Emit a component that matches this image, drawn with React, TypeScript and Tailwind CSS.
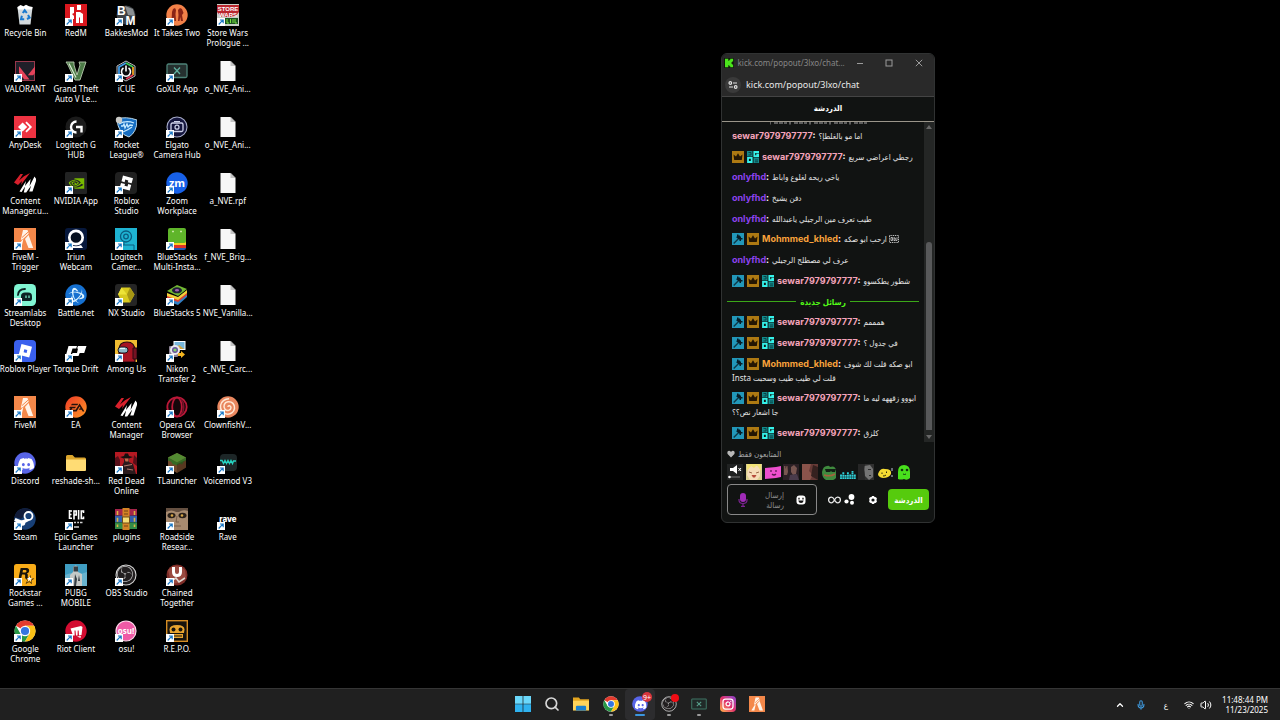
import type { ReactNode } from 'react';
import { ChevronUp, Instagram, Mic, Search, Volume2, Wifi } from 'lucide-react';
import {
  SiBattledotnet,
  SiDiscord,
  SiEa,
  SiNvidia,
  SiObsstudio,
  SiRockstargames,
  SiValorant,
} from 'react-icons/si';

/* ---------- desktop icons ---------- */

function Art({ children }: { children: ReactNode }) {
  return (
    <svg viewBox="0 0 22 22" className="size-full" aria-hidden="true">
      {children}
    </svg>
  );
}

const FileArt = (
  <Art>
    <path d="M3.5 1h10l5 5v15h-15z" fill="#f7f7f7" />
    <path d="M13.5 1v5h5z" fill="#c4c4c4" />
    <path d="M13.5 1l5 5" stroke="#8d8d8d" strokeWidth=".6" />
  </Art>
);

const FiveMArt = (
  <Art>
    <rect width="22" height="22" fill="#f4884a" />
    <path d="M9 2h4.5l1.2 3.800-5.700 5.200-2.200 1zM7.400 13l2-2L7.400 20H3.200zM14.600 7L19.200 20h-4.700L11 11z" fill="#fff3e8" />
    <path d="M8 9.500l6-5.300" stroke="#f4884a" strokeWidth="1" />
  </Art>
);

const ContentManagerArt = (
  <Art>
    <path d="M0 10.500L6.500 2 9 2 5 8.500 10 4.300 16 1 9.500 9.500 7 13l1-4-4 4z" fill="#d8202c" />
    <path d="M5.500 19.500L12 9 11 14l5.600-7-1 7L20.500 4.500 22.500 7.500 18.500 19.500h-3.300l2-6-5 7h-2.400l1.300-6L7.600 20z" fill="#fff" />
  </Art>
);

function ChromeArt() {
  return (
    <Art>
      <circle cx="11" cy="11" r="10.5" fill="#fff" />
      <path d="M11 11L1.9 5.75A10.5 10.5 0 0 1 20.1 5.75H11z" fill="#e33b2e" />
      <path d="M1.9 5.75L6.4 13.6 11 16.2 11 21.500A10.500 10.500 0 0 1 1.900 5.750z" fill="#279847" />
      <path d="M6.4 13.6L11 21.5l4.6-7.9z" fill="#279847" />
      <path d="M15.6 13.6L11 21.5A10.5 10.5 0 0 0 20.1 5.75H11z" fill="#fbc116" />
      <circle cx="11" cy="11" r="5.2" fill="#fff" />
      <circle cx="11" cy="11" r="4.1" fill="#3475e0" />
    </Art>
  );
}

function FolderArt() {
  return (
    <Art>
      <path d="M1 4.5Q1 3 2.5 3h5l2.4 2.5h9.6Q21 5.5 21 7v11H1z" fill="#dba52c" />
      <path d="M1 7.5h20V18q0 1-1 1H2q-1 0-1-1z" fill="#ffdc74" />
    </Art>
  );
}

function ObsArt() {
  return (
    <Art>
      <circle cx="11" cy="11" r="10" fill="#221f20" stroke="#d2d2d2" strokeWidth="1.1" />
      <SiObsstudio x="2" y="2" width="18" height="18" color="#bdbdbd" />
    </Art>
  );
}

function DiscordArt() {
  return (
    <Art>
      <circle cx="11" cy="11" r="10.7" fill="#5865e8" />
      <SiDiscord x="4" y="4" width="14" height="14" color="#fff" />
    </Art>
  );
}

type Item = { lines: string[]; art: ReactNode; shortcut?: boolean };

const items: Item[] = [
  {
    lines: ['Recycle Bin'],
    shortcut: false,
    art: (
      <Art>
        <path d="M3.5 3h15l-2 17.5h-11z" fill="#d3dadd" />
        <path d="M3.5 3l3-2 3 1.2L12 .8l3 1.4 3.5.8-.4 2.5H3.8z" fill="#fff" />
        <path d="M8.800 9l1.900-2.700L12.800 9M14 11l1.600 2.700-2.600 1.300M10.200 15.300H7l.9-3.600" fill="none" stroke="#1879cf" strokeWidth="2" />
      </Art>
    ),
  },
  {
    lines: ['VALORANT'],
    art: (
      <Art>
        <rect x="1.500" y="1.500" width="19" height="19" fill="#201f29" stroke="#97374b" />
        <SiValorant x="5" y="5" width="12" height="12" color="#e5425a" />
      </Art>
    ),
  },
  {
    lines: ['AnyDesk'],
    art: (
      <Art>
        <rect width="22" height="22" fill="#ee3342" />
        <path d="M4 11l4.6-4.6L13.2 11l-4.6 4.6z" fill="#fff" />
        <path d="M12 6.2L16.8 11 12 15.8" fill="none" stroke="#fff" strokeWidth="1.8" />
      </Art>
    ),
  },
  { lines: ['Content', 'Manager.u...'], shortcut: false, art: ContentManagerArt },
  { lines: ['FiveM -', 'Trigger'], art: FiveMArt },
  {
    lines: ['Streamlabs', 'Desktop'],
    art: (
      <Art>
        <rect width="22" height="22" rx="4.5" fill="#80f5d2" />
        <path d="M4 11c.3-4 3-6 7-6" fill="none" stroke="#0c2324" strokeWidth="1.8" strokeLinecap="round" />
        <path d="M7 12.5c0-3 1.5-4 4-4h3c3 0 4 1.500 4 4v2c0 2-1 2.5-3 2.5H7z" fill="#0c2324" />
        <path d="M12 11.5v2.5M15 11.5v2.5" stroke="#80f5d2" strokeWidth="1.2" />
      </Art>
    ),
  },
  {
    lines: ['Roblox Player'],
    art: (
      <Art>
        <rect width="22" height="22" rx="4" fill="#3a60ee" />
        <path d="M7.5 4L18 6.8 15.2 17.5 4.7 14.7zM10.3 9.2l-.7 3 3 .7.7-3z" fill="#fff" fillRule="evenodd" />
      </Art>
    ),
  },
  { lines: ['FiveM'], art: FiveMArt },
  { lines: ['Discord'], art: <DiscordArt /> },
  {
    lines: ['Steam'],
    art: (
      <Art>
        <circle cx="11" cy="11" r="10.7" fill="#173f75" />
        <path d="M.5 9A10.7 10.7 0 0 1 17 2L7 11z" fill="#111c39" />
        <path d="M.8 11.5L8 14.5l6-3" fill="none" stroke="#fff" strokeWidth="3.5" />
        <circle cx="14.5" cy="8" r="4" fill="#173f75" stroke="#fff" strokeWidth="1.8" />
        <circle cx="8.5" cy="15" r="2.8" fill="#fff" />
      </Art>
    ),
  },
  {
    lines: ['Rockstar', 'Games ...'],
    art: (
      <Art>
        <rect width="22" height="22" rx="2.5" fill="#f8ac18" />
        <SiRockstargames x="4.5" y="4" width="14" height="14" color="#17130b" />
        <path d="M15.500 12l.7 2h2l-1.600 1.200.6 2-1.700-1.200-1.700 1.200.6-2-1.600-1.200h2z" fill="#fff" />
      </Art>
    ),
  },
  { lines: ['Google', 'Chrome'], art: <ChromeArt /> },

  {
    lines: ['RedM'],
    art: (
      <Art>
        <rect width="22" height="22" fill="#d9171e" />
        <path d="M5 3h4v6L7 10l2 2v3H5zM12 1h4v5h-4zM11 8h4l3 2v9h-3v-6l-1 1v5h-3z" fill="#fff" />
      </Art>
    ),
  },
  {
    lines: ['Grand Theft', 'Auto V Le...'],
    art: (
      <Art>
        <path d="M1 2h8v3l3 10 3-10-1-3h7l-1 3-5 15h-5L3 5z" fill="#4c7b47" stroke="#b7c8ae" strokeWidth=".9" />
        <path d="M4 3.5l7 14" stroke="#d6e6ce" strokeWidth="1.2" />
      </Art>
    ),
  },
  {
    lines: ['Logitech G', 'HUB'],
    art: (
      <Art>
        <circle cx="11" cy="11" r="10.5" fill="#1b1b1b" />
        <path d="M11.5 5.5a5.5 5.5 0 1 0 0 11M11 11h5.5v5.5" fill="none" stroke="#fff" strokeWidth="2.4" />
      </Art>
    ),
  },
  {
    lines: ['NVIDIA App'],
    art: (
      <Art>
        <rect width="22" height="22" rx="1.5" fill="#222323" />
        <SiNvidia x="3.5" y="3.5" width="15.5" height="15.5" color="#78b900" />
      </Art>
    ),
  },
  {
    lines: ['Iriun', 'Webcam'],
    art: (
      <Art>
        <rect width="22" height="22" rx="3" fill="#07183c" />
        <circle cx="11" cy="9.5" r="6.7" fill="#07101f" stroke="#fff" strokeWidth="2.7" />
        <path d="M4 20l2-3q5 2.500 10 0l2 3z" fill="#fff" />
      </Art>
    ),
  },
  {
    lines: ['Battle.net'],
    art: (
      <Art>
        <circle cx="11" cy="11" r="10.7" fill="#1570d0" />
        <SiBattledotnet x="3.5" y="3.5" width="15" height="15" color="#d9f2ff" />
      </Art>
    ),
  },
  {
    lines: ['Torque Drift'],
    art: (
      <Art>
        <path d="M3.500 6h8.500l-.8 2.500H7.500L5.500 15H1zM13 6h8.500l-2.300 7h-4.500l-1.200 3H6.500l1-3H12l1-4.500h-1z" fill="#fff" />
      </Art>
    ),
  },
  {
    lines: ['EA'],
    art: (
      <Art>
        <defs>
          <linearGradient id="ea" x1="0" y1="0" x2="1" y2="1">
            <stop offset="0" stopColor="#ed3b27" />
            <stop offset="1" stopColor="#ff9726" />
          </linearGradient>
        </defs>
        <circle cx="11" cy="11" r="10.7" fill="url(#ea)" />
        <SiEa x="3.5" y="3.5" width="15" height="15" color="#24110c" />
      </Art>
    ),
  },
  { lines: ['reshade-sh...'], shortcut: false, art: <FolderArt /> },
  {
    lines: ['Epic Games', 'Launcher'],
    art: (
      <Art>
        <path d="M4.500 2v9M4 3h3M4 6.500h2.500M4 10.200h3M9 11.500V3h2.200v4H9M13.600 2v9.500M18.500 5V3h-2.200v7.500h2.200v-2" fill="none" stroke="#fff" strokeWidth="1.6" />
        <path d="M9 14.500h2M12.200 14.500h1.800M15 14.500h2.500M9 19h5" stroke="#d0d0d0" strokeWidth="1.3" />
      </Art>
    ),
  },
  {
    lines: ['PUBG', 'MOBILE'],
    art: (
      <Art>
        <rect width="22" height="22" fill="#3f9dc2" />
        <path d="M0 11l6-2 4 3v10H0zM16 10l6-2v14h-6z" fill="#68b3cf" />
        <path d="M8 3q3-3 5 0v5l4 2v12H5V11l3-3z" fill="#c5c9c7" />
        <path d="M8.500 2.500h4.500v5H8.500zM10 10l2 5-1 7h-2zM14 11l1 6h-2z" fill="#343d44" />
      </Art>
    ),
  },
  {
    lines: ['Riot Client'],
    art: (
      <Art>
        <circle cx="11" cy="11" r="10.7" fill="#d30c31" />
        <path d="M5.500 8.500L16 6l1.500 1-1 8-2.500.500-.3-5-1 0-.2 5H11l-.5-5h-1l.2 5H8z" fill="#fff" />
        <path d="M12 16.500l4-.5-.5 2z" fill="#fff" />
      </Art>
    ),
  },

  {
    lines: ['BakkesMod'],
    art: (
      <Art>
        <circle cx="11" cy="11" r="9.5" fill="#3d4145" />
        <path d="M10 2l8 3 2 7-7-1z" fill="#8a8f92" />
        <text x="2" y="11" fontFamily="Liberation Sans" fontSize="12" fontWeight="700" fill="#fff">B</text>
        <text x="10.500" y="20.500" fontFamily="Liberation Sans" fontSize="12" fontWeight="700" fill="#fff">M</text>
      </Art>
    ),
  },
  {
    lines: ['iCUE'],
    art: (
      <Art>
        <path d="M11 1l9 5v10l-9 5-9-5V6z" fill="#0b0b0e" stroke="#b9babd" />
        <path d="M4 14V7l7-4" fill="none" stroke="#3e9be8" strokeWidth="1.8" />
        <path d="M11 3l7 4" stroke="#39cb57" strokeWidth="1.8" />
        <path d="M18 7v8" stroke="#f0a41f" strokeWidth="1.8" />
        <path d="M18 15l-7 4" stroke="#e83756" strokeWidth="1.8" />
        <path d="M8.500 8a4.500 4.500 0 1 0 5 0M11 5.500v6" fill="none" stroke="#fff" strokeWidth="1.6" />
      </Art>
    ),
  },
  {
    lines: ['Rocket', 'League®'],
    art: (
      <Art>
        <path d="M2 3q9-3 20 1 0 12-8 17Q3 18 2 3z" fill="#166dc1" stroke="#cce6f5" strokeWidth=".9" />
        <path d="M4 8q7-4 15-1M6 10h2l1-2 1 4 2-4 1 3 2-2 3 .500M8 16q5-2 9-5" fill="none" stroke="#c5eaff" strokeWidth="1.300" />
        <circle cx="4" cy="4" r="3.200" fill="#cacac7" />
      </Art>
    ),
  },
  {
    lines: ['Roblox', 'Studio'],
    art: (
      <Art>
        <rect width="22" height="22" rx="4" fill="#202020" />
        <path d="M8 3.500L18 6.200l-1.400 5-3.800-1 .5-1.800-3-.8-.7 2.600L6.500 9.300zM6 11l4 1-.5 1.800 3 .8.700-2.600 3 .9-1.500 5.600L4.600 16z" fill="#fff" />
      </Art>
    ),
  },
  {
    lines: ['Logitech', 'Camer...'],
    art: (
      <Art>
        <rect width="22" height="22" fill="#1eb3d2" />
        <g fill="none" stroke="#0a5d80">
          <circle cx="11" cy="8.5" r="5.5" strokeWidth="1.3" />
          <circle cx="11" cy="8.5" r="2.3" strokeWidth="1.3" />
          <path d="M9 14v3h10v5M0 17h9" />
        </g>
      </Art>
    ),
  },
  {
    lines: ['NX Studio'],
    art: (
      <Art>
        <rect width="22" height="22" rx="3" fill="#252525" />
        <path d="M6.500 3.500H15l4.500 7-4.500 8H7l-4-8z" fill="#d8c91f" />
        <path d="M15 3.500l4.500 7-4.500 8-3-8z" fill="#a69614" />
        <path d="M6.500 3.500L12 10.500H3z" fill="#ede338" />
      </Art>
    ),
  },
  {
    lines: ['Among Us'],
    art: (
      <Art>
        <rect width="22" height="22" fill="#f0bc31" />
        <path d="M4 22V10q0-8 8-8t8 9v11z" fill="#a81522" stroke="#260b12" strokeWidth="1.2" />
        <path d="M18 8h4v11h-4z" fill="#751222" stroke="#260b12" />
        <rect x="3" y="7" width="10" height="6" rx="3" fill="#8db9c6" stroke="#22171e" />
        <path d="M5 8.500h5" stroke="#e5fafa" strokeWidth="1.2" />
      </Art>
    ),
  },
  { lines: ['Content', 'Manager'], shortcut: false, art: ContentManagerArt },
  {
    lines: ['Red Dead', 'Online'],
    art: (
      <Art>
        <rect width="22" height="22" fill="#b51922" />
        <path d="M0 6l3-2 2 4v14H0zM19 3l3 3v8l-4-3z" fill="#570f18" />
        <path d="M5 5l4-1 1-2.500h3L14 4l4 1-4 1.500H8.500z" fill="#16100f" />
        <path d="M9 6.500h5V10l4 2 3 10H6l1-8 2-4z" fill="#2a1a1c" />
        <path d="M9.500 6.500h4v3h-3z" fill="#c26a49" />
        <path d="M9 14l8-1.500M12 17l6 1" stroke="#b0786a" strokeWidth="1.200" />
      </Art>
    ),
  },
  {
    lines: ['plugins'],
    shortcut: false,
    art: (
      <Art>
        <rect y="1" width="22" height="6.7" fill="#a5254a" />
        <rect y="7.700" width="22" height="6.7" fill="#305fae" />
        <rect y="14.400" width="22" height="6.6" fill="#328b47" />
        <path d="M2.500 3v16M19.500 3v16" stroke="#ddb644" strokeWidth="1.6" strokeDasharray="4 2.7" />
        <rect x="7.500" width="7" height="22" fill="#d38325" />
        <rect x="7.500" y="9" width="7" height="6" fill="#f5dd75" stroke="#6e4c1d" />
        <path d="M9 3h4M9 6h4M9 18h4" stroke="#744317" strokeWidth="1.2" />
      </Art>
    ),
  },
  { lines: ['OBS Studio'], art: <ObsArt /> },
  {
    lines: ['osu!'],
    art: (
      <Art>
        <circle cx="11" cy="11" r="10" fill="#ef5aa6" stroke="#ffd9eb" strokeWidth="1.2" />
        <text x="11" y="14" textAnchor="middle" fontFamily="Open Sans" fontSize="8" fontWeight="700" fill="#fff">osu!</text>
      </Art>
    ),
  },

  {
    lines: ['It Takes Two'],
    art: (
      <Art>
        <circle cx="11" cy="11" r="10.7" fill="#f28148" />
        <path d="M6 8l1-3 2-1 1 2-.5 4 .5 7H8.500L8 13l-1 4H5.500zM12 6l2-2 2 1 1.500 4L16 11l1 6h-2l-.8-4-.7 4H12l.5-6z" fill="#8a2416" />
      </Art>
    ),
  },
  {
    lines: ['GoXLR App'],
    art: (
      <Art>
        <rect x="1" y="4" width="20" height="13.5" rx="1.5" fill="#25302f" stroke="#4d8378" strokeWidth="1.3" />
        <path d="M8 7.500l6 6.500M14 7.500L8 14" stroke="#5faf9f" strokeWidth="1.3" />
      </Art>
    ),
  },
  {
    lines: ['Elgato', 'Camera Hub'],
    art: (
      <Art>
        <circle cx="11" cy="11" r="10" fill="#15163d" stroke="#a7abc9" strokeWidth="1.1" />
        <rect x="5" y="7" width="12" height="8.5" rx="1.5" fill="none" stroke="#d0d4eb" strokeWidth="1.3" />
        <circle cx="11" cy="11.2" r="2" fill="none" stroke="#d0d4eb" strokeWidth="1.2" />
        <path d="M8 5.500h6" stroke="#d0d4eb" />
      </Art>
    ),
  },
  {
    lines: ['Zoom', 'Workplace'],
    art: (
      <Art>
        <circle cx="11" cy="11" r="10.7" fill="#1760e8" />
        <text x="11" y="14.500" textAnchor="middle" fontFamily="Open Sans" fontSize="11" fontWeight="700" fill="#fff">zm</text>
      </Art>
    ),
  },
  {
    lines: ['BlueStacks', 'Multi-Insta...'],
    art: (
      <Art>
        <path d="M3 17h17v3q0 2-2 2H5z" fill="#205ab3" />
        <path d="M2 16h18v4H4z" fill="#df3229" />
        <path d="M2 13h18v4H4z" fill="#f8ce24" />
        <rect x="2" width="18" height="15" rx="2" fill="#5fb52a" />
        <path d="M6 3.500h2M14 3.500h2" stroke="#c6e8a2" strokeWidth="1.500" />
      </Art>
    ),
  },
  {
    lines: ['BlueStacks 5'],
    art: (
      <Art>
        <path d="M1 13l11 4 9-7v3l-9 8L1 17z" fill="#317fc4" />
        <path d="M1 11l11 4 9-7v3l-9 7-11-4z" fill="#df4132" />
        <path d="M1 9l11 4 9-7v3l-9 7-11-4z" fill="#f3d039" />
        <path d="M1 7l10-6 10 4-9 7z" fill="#72b832" />
        <ellipse cx="11" cy="6.3" rx="5" ry="3" fill="#201e39" />
        <ellipse cx="11" cy="6.3" rx="2" ry="1.3" fill="#a25eae" />
      </Art>
    ),
  },
  {
    lines: ['Nikon', 'Transfer 2'],
    art: (
      <Art>
        <rect x="8" y="1.500" width="11" height="8" fill="#77b7db" stroke="#fff" />
        <path d="M9 9l4-4 5 4z" fill="#d2a43f" />
        <rect x="3" y="6" width="9" height="11" rx="1" fill="#8b8293" />
        <circle cx="9" cy="10" r="5" fill="#e7e8ec" />
        <circle cx="9" cy="10" r="3" fill="#67539a" />
        <circle cx="9" cy="10" r="1.600" fill="#7fd36c" />
        <path d="M12 13h3v-2l4 3.500-4 3.500v-2h-3z" fill="#f4b51f" />
      </Art>
    ),
  },
  {
    lines: ['Opera GX', 'Browser'],
    art: (
      <Art>
        <circle cx="11" cy="11" r="9.7" fill="#14060a" stroke="#ba1838" strokeWidth="1.8" />
        <ellipse cx="11" cy="11" rx="4.8" ry="9.5" fill="none" stroke="#ba1838" strokeWidth="1.8" />
        <path d="M14 2.500c5 3.500 5 13.500 0 17" fill="none" stroke="#7d132b" strokeWidth="1.5" />
      </Art>
    ),
  },
  {
    lines: ['TLauncher'],
    art: (
      <Art>
        <path d="M11 1l9 4.500v10L11 21l-9-5.500v-10z" fill="#70482a" />
        <path d="M11 1l9 4.500-9 5-9-5z" fill="#538b32" />
        <path d="M2 5.500l9 5v3l-2-1H7l-2-3-3-1zM20 5.500l-9 5v3l3-2 2 1 2-3 2-1z" fill="#356c25" />
        <path d="M11 12v9l9-5.500V8z" fill="#2a1b0f" opacity=".35" />
      </Art>
    ),
  },
  {
    lines: ['Roadside', 'Resear...'],
    art: (
      <Art>
        <rect width="22" height="22" fill="#a88b70" />
        <path d="M0 0h22v3q-5-2-9 1h-3Q6 1 0 4z" fill="#655041" />
        <ellipse cx="5.500" cy="7.500" rx="4" ry="2.700" fill="#2b2119" />
        <ellipse cx="16.500" cy="7.500" rx="4" ry="2.700" fill="#2b2119" />
        <circle cx="6" cy="7.500" r="1.300" fill="#d6a646" />
        <circle cx="16" cy="7.500" r="1.300" fill="#d6a646" />
        <path d="M11 8l-1 6h3M8 18h7" fill="none" stroke="#765d4a" />
      </Art>
    ),
  },
  {
    lines: ['Chained', 'Together'],
    art: (
      <Art>
        <circle cx="11" cy="11" r="10.5" fill="#7d2d28" />
        <path d="M2 6q8-8 17 0l1 7q-6 8-15 6z" fill="#9a4a40" />
        <path d="M7.500 3v5q0 3.500 3.500 3.500T14.500 8V3" fill="none" stroke="#fff" strokeWidth="3" />
        <path d="M5 17l5-3 3 4 6-4" fill="none" stroke="#dfd6cf" strokeWidth="1.600" />
      </Art>
    ),
  },
  {
    lines: ['R.E.P.O.'],
    art: (
      <Art>
        <rect x=".7" y=".7" width="20.6" height="20.6" fill="#17130d" stroke="#d58c24" strokeWidth="1.4" />
        <path d="M3.500 9.500q0-4.500 7.500-4.500t7.500 4.500L18 13H4z" fill="#e8a42f" />
        <circle cx="7.500" cy="9.500" r="2" fill="#17130d" />
        <circle cx="14.500" cy="9.500" r="2" fill="#17130d" />
        <path d="M6 14h11v4H6z" fill="#e8a42f" />
        <path d="M8 16h8" stroke="#17130d" />
      </Art>
    ),
  },

  {
    lines: ['Store Wars', 'Prologue ...'],
    art: (
      <Art>
        <rect width="22" height="22" fill="#c9cfc7" />
        <path d="M0 1h22v7l-4 5H4L0 8z" fill="#b9262e" />
        <text x="11" y="6.800" textAnchor="middle" fontFamily="Liberation Sans" fontSize="6" fontWeight="700" fill="#fff">STORE</text>
        <text x="11" y="12.500" textAnchor="middle" fontFamily="Liberation Sans" fontSize="6" fontWeight="700" fill="#fff">WARS</text>
        <rect x="8" y="14" width="13" height="6" fill="#1c5320" />
        <path d="M10 15v4h2M13.500 15v4M16 15v4M18 15v4h2" stroke="#79e142" fill="none" />
      </Art>
    ),
  },
  { lines: ['o_NVE_Ani...'], shortcut: false, art: FileArt },
  { lines: ['o_NVE_Ani...'], shortcut: false, art: FileArt },
  { lines: ['a_NVE.rpf'], shortcut: false, art: FileArt },
  { lines: ['f_NVE_Brig...'], shortcut: false, art: FileArt },
  { lines: ['NVE_Vanilla...'], shortcut: false, art: FileArt },
  { lines: ['c_NVE_Carc...'], shortcut: false, art: FileArt },
  {
    lines: ['ClownfishV...'],
    art: (
      <Art>
        <circle cx="11" cy="11" r="10.7" fill="#e9875f" />
        <path d="M11 11c0-2 3-1.500 3 .8s-4 4-6 1.500-1-7 3-7.500 7 2.500 6.500 6.500-4 6.500-8 5.800S3 13.500 3.500 9.500 8 2.800 12 2.800" fill="none" stroke="#ffe8d5" strokeWidth="1.500" />
      </Art>
    ),
  },
  {
    lines: ['Voicemod V3'],
    art: (
      <Art>
        <rect x="3" y="2" width="17" height="17" rx="4" fill="#1d2627" />
        <path d="M3 8.500h2l1.500 3 1.500-3 1.500 3 1.500-3 1.500 3 1.500-3 1.500 3 1-2.500H19" fill="none" stroke="#25d3c0" strokeWidth="1.400" />
      </Art>
    ),
  },
  {
    lines: ['Rave'],
    art: (
      <Art>
        <text x="11" y="14" textAnchor="middle" fontFamily="Inter" fontSize="8" fontWeight="800" fill="#fff">rave</text>
      </Art>
    ),
  },
];

function DesktopItem({ lines, art, shortcut = true }: Item) {
  return (
    <button type="button" className="flex h-14 flex-col items-center gap-0.5 pt-1">
      <span className="relative block size-[22px] shrink-0">
        {art}
        {shortcut && (
          <svg viewBox="0 0 8 8" className="absolute bottom-0 left-0 size-2" aria-hidden="true">
            <rect width="8" height="8" fill="#fff" />
            <path d="M1.7 6.5L5.8 2.2M3 2h3.2v3.2" fill="none" stroke="#1b78c6" strokeWidth="1.2" />
          </svg>
        )}
      </span>
      <span className="flex flex-col items-center text-[8px] leading-[10px] whitespace-nowrap text-white">
        {lines.map((line) => (
          <span key={line}>{line}</span>
        ))}
      </span>
    </button>
  );
}

/* ---------- chat window ---------- */

type BadgeKind = 'mod' | 'crown' | 'og';

function Badge({ kind }: { kind: BadgeKind }) {
  if (kind === 'mod')
    return (
      <svg viewBox="0 0 12 12" className="size-3" role="img" aria-label="moderator">
        <rect width="12" height="12" fill="#2297b9" />
        <path d="M5 1.500h1.500v1H8v1h1v1.500h1.500v1.500H9v1.500H7.500v-1.500H6v1H5v1H4v1H3v1H1.500V9.500h1v-1h1v-1h1v-1h1V5h-1V3.500H5z" fill="#071c26" />
      </svg>
    );
  if (kind === 'crown')
    return (
      <svg viewBox="0 0 12 12" className="size-3" role="img" aria-label="vip">
        <rect width="12" height="12" fill="#ad7912" />
        <path d="M1.500 3.500l2.500 2L6 2.300l2 3.200 2.500-2L9.800 9H2.200z" fill="#241603" />
      </svg>
    );
  return (
    <svg viewBox="0 0 12 12" className="size-3" role="img" aria-label="og">
      <path d="M0 0h5.500v5.500H0zM6.500 6.500H12V12H6.500z" fill="#128a8c" />
      <path d="M1.500 1.500h2.500v2.500H1.500M8 9h3M8 10.800h3" fill="none" stroke="#0a3d42" strokeWidth=".9" />
      <path d="M12 1H7.300v4.200h3.900V3.400H9.300M1 6.800h3.700v4.200H1z" fill="none" stroke="#35f2ea" strokeWidth="1.800" />
    </svg>
  );
}

type Message = {
  user: 'sewar7979797777' | 'onlyfhd' | 'Mohmmed_khled';
  badges: BadgeKind[];
  text: string;
  more?: string;
  emote?: boolean;
};

const nameColor = {
  sewar7979797777: 'text-[#f5a3bb]',
  onlyfhd: 'text-[#8e43f0]',
  Mohmmed_khled: 'text-[#f9a23b]',
};

const older: Message[] = [
  { user: 'sewar7979797777', badges: [], text: 'اما مو بالغلطإ؟' },
  { user: 'sewar7979797777', badges: ['crown', 'og'], text: 'رجطي اعراضي سريع' },
  { user: 'onlyfhd', badges: [], text: 'ياخي ريحه لغلوع واباط' },
  { user: 'onlyfhd', badges: [], text: 'دفن يشيخ' },
  { user: 'onlyfhd', badges: [], text: 'طيب تعرف مين الرجيلي ياعبدالله' },
  { user: 'Mohmmed_khled', badges: ['mod', 'crown'], text: 'ارحب ابو صكه', emote: true },
  { user: 'onlyfhd', badges: [], text: 'عرف لي مصطلح الرجيلي' },
  { user: 'sewar7979797777', badges: ['mod', 'crown', 'og'], text: 'شطور يطكسوو' },
];

const newer: Message[] = [
  { user: 'sewar7979797777', badges: ['mod', 'crown', 'og'], text: 'همممم' },
  { user: 'sewar7979797777', badges: ['mod', 'crown', 'og'], text: 'في جدول ؟' },
  { user: 'Mohmmed_khled', badges: ['mod', 'crown'], text: 'ابو صكه قلت لك شوف', more: 'قلت لي طيب طيب وسحبت Insta' },
  { user: 'sewar7979797777', badges: ['mod', 'crown', 'og'], text: 'ابووو زقههه ليه ما', more: 'جا اشعار نص؟؟' },
  { user: 'sewar7979797777', badges: ['mod', 'crown', 'og'], text: 'كلزق' },
];

function ChatLine({ user, badges, text, more, emote }: Message) {
  return (
    <li className="pl-[5px] text-[9px] leading-[14px] whitespace-nowrap text-[#e6e6e6]">
      <div className="flex h-[14px] items-center gap-[3px]">
        {badges.map((kind) => (
          <Badge key={kind} kind={kind} />
        ))}
        <span className="font-['Inter','Liberation_Sans',sans-serif] font-bold text-white">
          <span className={nameColor[user]}>{user}</span>:
        </span>
        <span dir="rtl" className="flex items-center gap-0.5 text-[8px]">
          {emote && (
            <svg viewBox="0 0 10 8" className="h-2 w-2.5" aria-hidden="true">
              <rect x=".5" y=".5" width="9" height="7" fill="none" stroke="#d0d0d0" strokeDasharray="1 .8" />
              <path d="M2 2.500h1.500v3H2zM5 2.200v3.500M5 3h1.300v2.500H5M8 2.200v3.300H7" fill="none" stroke="#d0d0d0" strokeWidth=".8" />
            </svg>
          )}
          {text}
        </span>
      </div>
      {more && (
        <div className="flex h-[14px] items-center text-[8px]">
          <span dir="rtl">{more}</span>
        </div>
      )}
    </li>
  );
}

const emotes: { label: string; art: ReactNode }[] = [
  { label: 'mute', art: <><rect width="16" height="16" fill="#202222" /><path d="M3 4h3l4-3v9L6 7H3z" fill="#fff" /><path d="M11.500 4l2.500 3M14 4l-2.500 3" stroke="#fff" /><circle cx="2.500" cy="13" r="1.300" fill="#fff" /><path d="M4 13h9" stroke="#777" /></> },
  { label: 'laugh', art: <><rect width="16" height="16" fill="#d9cf91" /><path d="M2 4q6-6 12 0v8l-3 4H4l-3-5z" fill="#f6ddb9" /><path d="M1 7l4-5 3 2 3-3 4 6V0H1z" fill="#f1e276" /><path d="M3 8l3 1M10 9l3-1" stroke="#9d6a4a" /><path d="M5.500 11h5l-1.500 2.500H7z" fill="#b54a3b" /></> },
  { label: 'pink', art: <><path d="M0 4l11-1 5-1v11l-5 1-11 1z" fill="#ee4fce" /><path d="M6 6v2M11 6v2M7 10q2 2 4 0" fill="none" stroke="#571a50" strokeWidth="1.2" /></> },
  { label: 'hands', art: <><rect width="16" height="16" fill="#2b2025" /><path d="M1 2h1.500v3l1-3h1l.5 6-1 3H1zM8 3l3-2 3 3-1 6-3 1-2-3z" fill="#785650" /><path d="M7 11l7-1 2 6H6z" fill="#493b4b" /></> },
  { label: 'red', art: <><rect width="16" height="16" fill="#663a36" /><path d="M0 0h9l-2 7 4 4-3 5H0z" fill="#8a544b" /><path d="M11 1l5 2v13l-7-4z" fill="#35211f" /></> },
  { label: 'frog', art: <><path d="M1 8q1-6 5-6 2-1 3 1 5-2 6 3v8q-4 4-10 2-4-2-4-8z" fill="#3f8a3e" /><path d="M4 5h11l-1 3h-3l-1-1-1 1H5z" fill="#121f14" /><path d="M3 11q6 2 11-1" stroke="#a85f3d" strokeWidth="1.500" fill="none" /></> },
  { label: 'equalizer', art: <path d="M1 15V10M3.300 15V8M5.600 15v-4M7.900 15V8M10.200 15v-5M12.500 15V7M14.800 15v-5" stroke="#2fd0d8" strokeWidth="1.900" strokeDasharray="1.800 .4" /> },
  { label: 'face', art: <><rect width="16" height="16" fill="#303030" /><path d="M6 2l6-1 3 4v8l-4 3-4-4z" fill="#747474" /><path d="M10 5.500h3M11 11.500h2" stroke="#2c2c2c" strokeWidth="1.200" /><path d="M0 0h7l-1 6 1 10H0z" fill="#262626" /></> },
  { label: 'blob', art: <><path d="M1 10q2-6 7-5 7 0 6 5-2 4-8 4-5-1-5-4z" fill="#f5dc32" /><path d="M5 8.500v1.500M9.500 7.500V9M6 12q2 0 3-1" stroke="#302b0d" fill="none" /><path d="M15 4v3M15 11v2" stroke="#bfc7dc" /></> },
  { label: 'ghost', art: <><path d="M2 15V8q0-7 6-7t6 7v6q-3 3-6 1-3 1-6 0z" fill="#48e01c" /><circle cx="6" cy="6" r="1.300" fill="#123610" /><circle cx="11" cy="6" r="1.300" fill="#123610" /><path d="M7 10q1.500 1 3 0" stroke="#123610" fill="none" /></> },
];

function ChatWindow() {
  return (
    <section
      aria-label="kick.com chat"
      className="absolute top-[53px] left-[721px] flex w-[214px] flex-col overflow-hidden rounded-md border border-[#303232] bg-[#111312]"
    >
      <header className="bg-[#292929] text-[#9b9b9b]">
        <div className="flex h-5 items-center pb-0.5 pl-0.5">
          <svg viewBox="0 0 10 10" className="size-2.5" aria-hidden="true">
            <rect width="10" height="10" fill="#0b1407" />
            <path d="M1 .5h3.500v2.200h1V1.600h1V.5h3v3h-1v1h-1v1h1v1h1v3h-3V8.400h-1V7.300h-1v2.200H1z" fill="#4be51c" />
          </svg>
          <span className="ml-1 grow text-[8px] whitespace-nowrap text-[#868686]">kick.com/popout/3lxo/chat...</span>
          <button type="button" aria-label="Minimize" className="grid h-5 w-[31px] place-items-center">
            <svg viewBox="0 0 8 8" className="size-2"><path d="M1 4.500h6" stroke="currentColor" /></svg>
          </button>
          <button type="button" aria-label="Maximize" className="grid h-5 w-[31px] place-items-center">
            <svg viewBox="0 0 8 8" className="size-2"><rect x="1" y="1" width="6" height="6" fill="none" stroke="currentColor" /></svg>
          </button>
          <button type="button" aria-label="Close" className="grid h-5 w-[31px] place-items-center">
            <svg viewBox="0 0 8 8" className="size-2"><path d="M.8.8l6.400 6.400M7.200.8L.8 7.200" stroke="currentColor" /></svg>
          </button>
        </div>
        <div className="flex h-[23px] items-center gap-[5px] border-b border-[#444] pl-[3px]">
          <button type="button" aria-label="Site settings" className="grid size-4 place-items-center rounded-full bg-[#3a3a3a]">
            <svg viewBox="0 0 10 8" className="h-2 w-2.5" fill="none" stroke="#e2e2e2" strokeWidth="1.2">
              <circle cx="2.300" cy="2" r="1.300" />
              <path d="M5 2h4M1 6h4" />
              <circle cx="7.700" cy="6" r="1.300" />
            </svg>
          </button>
          <span className="text-[9px] whitespace-nowrap text-[#e8e8e8]">kick.com/popout/3lxo/chat</span>
        </div>
      </header>

      <h1 className="flex h-[25px] items-center justify-center border-b border-[#9a958a] pb-0.5 text-[8px] font-bold text-white">الدردشة</h1>

      <div className="flex h-[320px]">
        <div className="flex min-w-0 grow flex-col px-[5px] pb-0.5">
          <svg viewBox="0 0 100 3" className="ml-[43px] h-[3px] w-[100px] shrink-0" aria-hidden="true">
            <path d="M0 0v2.500M4 1h13M20 0v2.500M24 1h13M40 0v2.500M44 1h13M60 0v2.500M64 1h13M80 0v2.500M84 1h13" stroke="#777" strokeWidth="1.500" strokeDasharray="4 1" />
          </svg>
          <ul className="flex grow flex-col justify-between pt-1">
            {older.map((m) => (
              <ChatLine key={m.text} {...m} />
            ))}
            <li className="flex h-[14px] items-center gap-1 text-[8px] font-bold text-[#53fc18]">
              <span className="h-px grow bg-[#3ba818]" />
              رسائل جديدة
              <span className="h-px grow bg-[#3ba818]" />
            </li>
            {newer.map((m) => (
              <ChatLine key={m.text} {...m} />
            ))}
          </ul>
        </div>
        <div className="flex w-2.5 shrink-0 flex-col items-center justify-between bg-[#242625] py-0.5">
          <svg viewBox="0 0 6 6" className="size-1.5"><path d="M3 1l3 4H0z" fill="#686868" /></svg>
          <span className="mt-[112px] w-1.5 grow rounded-t-sm bg-[#58595a]" />
          <svg viewBox="0 0 6 6" className="mt-1 size-1.5"><path d="M3 5l3-4H0z" fill="#686868" /></svg>
        </div>
      </div>

      <footer className="px-[5px] pt-1.5 pb-[7px]">
        <div className="flex h-3 items-center gap-[3px] text-[8px] text-[#a5a7a7]">
          <svg viewBox="0 0 8 8" className="size-2"><path d="M4 7.500L.6 4Q-.3 1 2 .7q1.300 0 2 1.200Q4.700.7 6 .7q2.300.3 1.400 3.300z" fill="#b8b8b8" /></svg>
          <span>المتابعون فقط</span>
        </div>
        <div className="mt-1 flex justify-between pr-[17px]">
          {emotes.map((e) => (
            <button key={e.label} type="button" aria-label={e.label} className="size-4">
              <svg viewBox="0 0 16 16" className="size-4">{e.art}</svg>
            </button>
          ))}
        </div>
        <div className="mt-1 flex items-center">
          <div className="flex h-[31px] w-[90px] shrink-0 items-center justify-between rounded-sm border border-[#898989] px-2.5">
            <svg viewBox="0 0 10 14" className="h-[14px] w-2.5" role="img" aria-label="voice">
              <rect x="2" y="0" width="6" height="9" rx="3" fill="#a02bb8" />
              <path d="M1 6v1q0 3.500 4 3.500T9 7V6M5 10.500V13M3 13.300h4" fill="none" stroke="#7b2391" strokeWidth="1.2" />
            </svg>
            <textarea
              dir="rtl"
              rows={2}
              aria-label="إرسال رسالة"
              placeholder="إرسال رسالة"
              className="h-5 w-7 resize-none overflow-hidden bg-transparent pr-0.5 text-[8px] leading-[10px] text-white outline-none placeholder:text-[#8c8c8c]"
            />
            <button type="button" aria-label="Emoji" className="size-2.5">
              <svg viewBox="0 0 10 10" className="size-2.5">
                <rect x=".5" y=".5" width="9" height="9" rx="3" fill="#fff" />
                <path d="M3 2.800v1.700M7 2.800v1.700" stroke="#111" strokeWidth="1.3" />
                <path d="M2.300 5.500h5.400Q7.200 8 5 8T2.300 5.500" fill="#111" />
              </svg>
            </button>
          </div>
          <button type="button" aria-label="Infinity" className="ml-[11px]">
            <svg viewBox="0 0 13 8" className="h-2 w-[13px]"><path d="M6.500 4Q5 1.200 3.400 1.200a2.800 2.800 0 0 0 0 5.600Q5 6.800 6.500 4t3.100-2.800a2.800 2.800 0 0 1 0 5.600Q8 6.800 6.500 4z" fill="none" stroke="#e6e6e6" strokeWidth="1.300" /></svg>
          </button>
          <button type="button" aria-label="Identity" className="ml-[3px]">
            <svg viewBox="0 0 11 11" className="size-[11px]" fill="#fff"><circle cx="7.500" cy="3" r="2.900" /><circle cx="2.500" cy="7.500" r="2.100" /><circle cx="8" cy="8.800" r="2" /></svg>
          </button>
          <button type="button" aria-label="Settings" className="ml-[13px]">
            <svg viewBox="0 0 10 10" className="size-2.5">
              <path d="M5 1v8M1.500 3l7 4M8.500 3l-7 4" stroke="#fff" strokeWidth="2.200" />
              <circle cx="5" cy="5" r="2.600" fill="none" stroke="#fff" strokeWidth="1.800" />
              <circle cx="5" cy="5" r="1.600" fill="#141717" />
            </svg>
          </button>
          <button type="button" className="ml-auto h-[21px] w-[41px] rounded-sm bg-[#56cb0d] text-[8px] font-bold text-white">الدردشة</button>
        </div>
      </footer>
    </section>
  );
}

/* ---------- taskbar ---------- */

const taskbarApps: { label: string; art: ReactNode; mark?: 'open' | 'active' }[] = [
  {
    label: 'Start',
    art: (
      <Art>
        <path d="M0 0h10.500v10.500H0zM11.500 0H22v10.500H11.500z" fill="#6bd8fb" />
        <path d="M0 11.500h10.500V22H0zM11.500 11.500H22V22H11.500z" fill="#2fb2ef" />
      </Art>
    ),
  },
  { label: 'Search', art: <Search className="size-full text-[#d8d8d8]" strokeWidth={2.5} /> },
  {
    label: 'File Explorer',
    art: (
      <Art>
        <path d="M0 2h8l2 2.500h12V19H0z" fill="#e3a51f" />
        <path d="M0 6.500h22v13.500H0z" fill="#ffd45a" />
        <path d="M4 20v-5q0-1.500 1.500-1.500h11q1.500 0 1.500 1.500v5z" fill="#1a80cf" />
      </Art>
    ),
  },
  { label: 'Google Chrome', art: <ChromeArt />, mark: 'open' },
  { label: 'Discord', art: <DiscordArt />, mark: 'active' },
  { label: 'OBS Studio', art: <ObsArt />, mark: 'open' },
  {
    label: 'GoXLR App',
    art: (
      <Art>
        <rect x="1" y="4" width="20" height="14" rx="1" fill="#202a28" stroke="#3f7564" strokeWidth="1.400" />
        <path d="M8 8l6 6M14 8l-6 6" stroke="#58a08b" strokeWidth="1.400" />
      </Art>
    ),
    mark: 'open',
  },
  {
    label: 'Instagram',
    art: (
      <span className="grid size-full place-items-center rounded bg-linear-to-tr from-[#fdb13b] via-[#e12c6c] to-[#8a3ad0]">
        <Instagram className="size-3 text-white" strokeWidth={2.5} />
      </span>
    ),
  },
  { label: 'FiveM', art: FiveMArt },
];

function Taskbar() {
  return (
    <nav aria-label="Taskbar" className="grid h-8 shrink-0 grid-cols-[1fr_264px_1fr] border-t border-[#353535] bg-[#202020]">
      <span />
      <div className="grid grid-cols-9">
        {taskbarApps.map(({ label, art, mark }) => (
          <button
            key={label}
            type="button"
            aria-label={label}
            className={`flex flex-col items-center rounded pt-[7px] ${mark === 'active' ? 'bg-[#2c2c2e]' : ''}`}
          >
            <span className="relative block size-4">
              {art}
              {label === 'Discord' && (
                <span className="absolute -top-1 -right-1 grid size-2.5 place-items-center rounded-full bg-[#d8363d] text-[7px] leading-none text-white">9+</span>
              )}
              {label === 'OBS Studio' && <span className="absolute -top-0.5 -right-0.5 size-2 rounded-full bg-[#f00c14]" />}
            </span>
            {mark === 'active' && <span className="mt-0.5 h-0.5 w-2.5 rounded-full bg-[#3b96e0]" />}
            {mark === 'open' && <span className="mt-0.5 h-0.5 w-1 rounded-full bg-[#9b9b9b]" />}
          </button>
        ))}
      </div>
      <div className="flex items-center justify-end pr-3 text-white">
        <button type="button" aria-label="Hidden icons"><ChevronUp className="size-2.5" strokeWidth={3} /></button>
        <button type="button" aria-label="Microphone" className="ml-[11px]"><Mic className="size-2.5 text-[#3f9be0]" strokeWidth={2.5} /></button>
        <button type="button" className="ml-[18px] text-[8px]">ع</button>
        <button type="button" aria-label="Network" className="ml-4"><Wifi className="size-2.5" strokeWidth={2.5} /></button>
        <button type="button" aria-label="Volume" className="ml-1.5"><Volume2 className="size-3" /></button>
        <div className="ml-2.5 text-right text-[8px] leading-[10px]">
          <div>11:48:44 PM</div>
          <div>11/23/2025</div>
        </div>
      </div>
    </nav>
  );
}

export default function App() {
  return (
    <div className="relative flex min-h-screen flex-col bg-black font-[family-name:'Noto_Sans','DejaVu_Sans_Condensed','DejaVu_Sans',sans-serif]">
      <main className="grow">
        <div className="grid w-[253px] grid-flow-col grid-cols-5 grid-rows-12">
          {items.map((item, i) => (
            <DesktopItem key={i} {...item} />
          ))}
        </div>
      </main>
      <ChatWindow />
      <Taskbar />
    </div>
  );
}
